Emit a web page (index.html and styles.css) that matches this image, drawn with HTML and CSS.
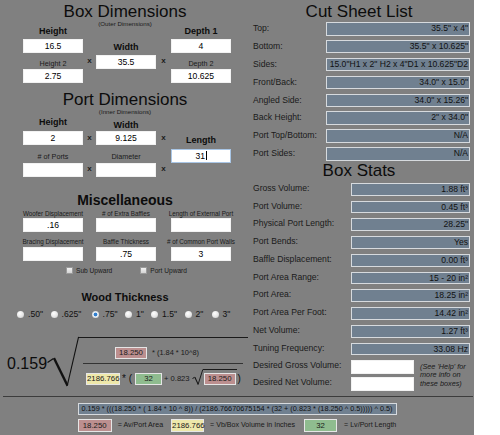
FILE: index.html
```html
<!DOCTYPE html>
<html>
<head>
<meta charset="utf-8">
<link rel="stylesheet" href="styles.css">
</head>
<body>
<div class="app">
  <div class="top">
    <div class="left">
      <div class="sec box">
        <div class="title">Box Dimensions</div>
        <div class="sub">(Outer Dimensions)</div>
        <div class="dims">
          <div class="col">
            <div class="lb mt-1">Height</div>
            <div class="field mt3">16.5</div>
            <div class="ls mt6">Height 2</div>
            <div class="field mt1">2.75</div>
          </div>
          <div class="xcol gap1"><span class="x mt29">x</span></div>
          <div class="col">
            <div class="lb mt15">Width</div>
            <div class="field mt3">35.5</div>
          </div>
          <div class="xcol gap2"><span class="x mt29">x</span></div>
          <div class="col">
            <div class="lb mt-1">Depth 1</div>
            <div class="field mt3">4</div>
            <div class="ls mt6">Depth 2</div>
            <div class="field mt1">10.625</div>
          </div>
        </div>
      </div>

      <div class="sec port">
        <div class="title">Port Dimensions</div>
        <div class="sub">(Inner Dimensions)</div>
        <div class="dims">
          <div class="col">
            <div class="lb mt2">Height</div>
            <div class="field mt4">2</div>
            <div class="ls mt7">&#35; of Ports</div>
            <div class="field mt2"></div>
          </div>
          <div class="xcol gap1"><span class="x mt18">x</span><span class="x mt21">x</span></div>
          <div class="col">
            <div class="lb mt5">Width</div>
            <div class="field mt1">9.125</div>
            <div class="ls mt7">Diameter</div>
            <div class="field mt2"></div>
          </div>
          <div class="xcol gap2"><span class="x mt18">x</span><span class="x mt21">x</span></div>
          <div class="col">
            <div class="lb mt20">Length</div>
            <div class="field focus mt4">31<span class="caret"></span></div>
          </div>
        </div>
      </div>

      <div class="sec misc">
        <div class="mtitle">Miscellaneous</div>
        <div class="dims">
          <div class="col">
            <div class="lm mt2">Woofer Displacement</div>
            <div class="field">.16</div>
            <div class="lm mt6">Bracing Displacement</div>
            <div class="field mt1"></div>
          </div>
          <div class="gap1"></div>
          <div class="col">
            <div class="lm mt2">&#35; of Extra Baffles</div>
            <div class="field"></div>
            <div class="lm mt6">Baffle Thickness</div>
            <div class="field mt1">.75</div>
          </div>
          <div class="gap2"></div>
          <div class="col">
            <div class="lm mt2">Length of External Port</div>
            <div class="field"></div>
            <div class="lm mt6">&#35; of Common Port Walls</div>
            <div class="field mt1">3</div>
          </div>
        </div>
        <div class="checks">
          <div class="chk"><span class="cbox"></span><span>Sub Upward</span></div>
          <div class="chk chk2"><span class="cbox"></span><span>Port Upward</span></div>
        </div>
      </div>

      <div class="sec wood">
        <div class="wtitle">Wood Thickness</div>
        <div class="radios">
          <div class="radio w34"><span class="rdot"></span><span>.50"</span></div>
          <div class="radio w41"><span class="rdot"></span><span>.625"</span></div>
          <div class="radio w34"><span class="rdot on"></span><span>.75"</span></div>
          <div class="radio w26"><span class="rdot"></span><span>1"</span></div>
          <div class="radio w34"><span class="rdot"></span><span>1.5"</span></div>
          <div class="radio w27"><span class="rdot"></span><span>2"</span></div>
          <div class="radio"><span class="rdot"></span><span>3"</span></div>
        </div>
      </div>

      <div class="formula">
        <div class="coef">0.159</div>
        <svg class="rad" width="33" height="52" viewBox="0 0 33 52">
          <path d="M1.5 26.5 L7.5 22.5" stroke="#111" stroke-width="1.3" fill="none"/>
          <path d="M7 22.8 L9 21.6 L22.3 48.6 L20.6 50.4 Z" fill="#111"/>
          <path d="M21.2 49.8 L32.6 0.8" stroke="#111" stroke-width="1.1" fill="none"/>
        </svg>
        <div class="frac">
          <div class="num">
            <span class="tbox pink">18.250</span>
            <span class="ntext">* (1.84 * 10^8)</span>
          </div>
          <div class="fline"></div>
          <div class="den">
            <span class="tbox yel">2186.766</span>
            <span class="op">* (</span>
            <span class="tbox grn">32</span>
            <span class="plus">+ 0.823</span>
            <span class="sqrt">
              <svg class="srad" width="11" height="16" viewBox="0 0 11 16">
                <path d="M0.5 9.5 L2.6 8.3" stroke="#111" stroke-width="1" fill="none"/>
                <path d="M2.4 8.4 L3.4 7.9 L6.6 15.2 L5.8 15.8 Z" fill="#111"/>
                <path d="M6.1 15.4 L10.8 0.5" stroke="#111" stroke-width="0.9" fill="none"/>
              </svg>
              <span class="rbody"><span class="tbox pink">18.250</span></span>
            </span>
            <span class="op cp">)</span>
          </div>
        </div>
      </div>
    </div>

    <div class="right">
      <div class="title rtitle">Cut Sheet List</div>
      <div class="cut">
        <div class="row"><span class="rl">Top:</span><span class="rf">35.5" x 4"</span></div>
        <div class="row"><span class="rl">Bottom:</span><span class="rf">35.5" x 10.625"</span></div>
        <div class="row"><span class="rl">Sides:</span><span class="rf">15.0"H1 x 2" H2 x 4"D1 x 10.625"D2</span></div>
        <div class="row"><span class="rl">Front/Back:</span><span class="rf">34.0" x 15.0"</span></div>
        <div class="row"><span class="rl">Angled Side:</span><span class="rf">34.0" x 15.26"</span></div>
        <div class="row"><span class="rl">Back Height:</span><span class="rf">2" x 34.0"</span></div>
        <div class="row"><span class="rl">Port Top/Bottom:</span><span class="rf">N/A</span></div>
        <div class="row"><span class="rl">Port Sides:</span><span class="rf">N/A</span></div>
      </div>
      <div class="title rtitle stitle">Box Stats</div>
      <div class="stats">
        <div class="row"><span class="rl">Gross Volume:</span><span class="rf">1.88 ft³</span></div>
        <div class="row"><span class="rl">Port Volume:</span><span class="rf">0.45 ft³</span></div>
        <div class="row"><span class="rl">Physical Port Length:</span><span class="rf">28.25"</span></div>
        <div class="row"><span class="rl">Port Bends:</span><span class="rf">Yes</span></div>
        <div class="row"><span class="rl">Baffle Displacement:</span><span class="rf">0.00 ft³</span></div>
        <div class="row"><span class="rl">Port Area Range:</span><span class="rf">15 - 20 in²</span></div>
        <div class="row"><span class="rl">Port Area:</span><span class="rf">18.25 in²</span></div>
        <div class="row"><span class="rl">Port Area Per Foot:</span><span class="rf">14.42 in²</span></div>
        <div class="row"><span class="rl">Net Volume:</span><span class="rf">1.27 ft³</span></div>
        <div class="row"><span class="rl">Tuning Frequency:</span><span class="rf">33.08 Hz</span></div>
      </div>
      <div class="desired">
        <span class="dl">Desired Gross Volume:</span>
        <span class="din"></span>
        <span class="note">(See 'Help' for<br>more info on<br>these boxes)</span>
        <span class="dl">Desired Net Volume:</span>
        <span class="din"></span>
      </div>
    </div>
  </div>

  <div class="divider"></div>
  <div class="fbar">0.159 * (((18.250 * ( 1.84 * 10 ^ 8)) / (2186.76670675154 * (32 + (0.823 * (18.250 ^ 0.5))))) ^ 0.5)</div>
  <div class="legend">
    <span class="lbox pink">18.250</span>
    <span class="ltext g6">= Av/Port Area</span>
    <span class="lbox yel g8">2186.766</span>
    <span class="ltext g6">= Vb/Box Volume in Inches</span>
    <span class="lbox grn g9">32</span>
    <span class="ltext g7">= Lv/Port Length</span>
  </div>
</div>
</body>
</html>
```

FILE: styles.css
```css
* { box-sizing: border-box; }
html, body { margin: 0; padding: 0; background: #ffffff; }
body { font-family: "Liberation Sans", Arial, sans-serif; color: #111; }

.app { width: 474px; height: 435px; background: #808080; overflow: hidden; }
.top { display: flex; height: 396px; }
.left { width: 250px; }
.right { width: 224px; padding: 0 4px 0 3px; }

.title { font-size: 17px; line-height: 20px; text-align: center; white-space: nowrap; color: #0c0c0c; }
.box .title { padding-top: 2px; }
.port .title { margin-top: 7px; }
.sub { font-size: 6.2px; line-height: 6px; text-align: center; margin-top: -1px; color: #1a1a1a; }

.dims { display: flex; padding-left: 23px; }
.col { width: 60px; display: flex; flex-direction: column; }
.gap1 { width: 13px; }
.gap2 { width: 15px; }
.xcol { display: flex; flex-direction: column; align-items: center; }
.x { font-size: 8px; line-height: 10px; font-weight: bold; color: #1a1a1a; }

.lb { font-size: 9px; line-height: 10px; font-weight: bold; text-align: center; white-space: nowrap; color: #0c0c0c; }
.ls { font-size: 7.2px; line-height: 9px; text-align: center; white-space: nowrap; color: #1a1a1a; }
.lm { font-size: 6.3px; line-height: 8px; text-align: center; white-space: nowrap; margin-left: -14px; margin-right: -14px; color: #1a1a1a; }

.field { height: 14px; background: #fff; border: 1px solid #f2f2f2; font-size: 8.6px; line-height: 12px; text-align: center; color: #000; white-space: nowrap; }
.field.focus { border-color: #a9c6e6; }
.caret { display: inline-block; width: 1px; height: 9px; background: #000; vertical-align: -1px; margin-left: 0.5px; }

.mt-1 { margin-top: -1px; }
.mt1 { margin-top: 1px; }
.mt2 { margin-top: 2px; }
.mt3 { margin-top: 3px; }
.mt4 { margin-top: 4px; }
.mt5 { margin-top: 5px; }
.mt6 { margin-top: 6px; }
.mt7 { margin-top: 7px; }
.mt15 { margin-top: 15px; }
.mt18 { margin-top: 18px; }
.mt20 { margin-top: 20px; }
.mt21 { margin-top: 21px; }
.mt29 { margin-top: 29px; }

.mtitle { font-size: 14px; line-height: 16px; font-weight: bold; text-align: center; margin-top: 15px; color: #0c0c0c; }

.checks { display: flex; align-items: center; padding-left: 66px; margin-top: 6px; height: 7px; }
.chk { display: flex; align-items: center; gap: 3px; font-size: 6.6px; line-height: 8px; color: #1a1a1a; white-space: nowrap; }
.chk2 { margin-left: 28px; }
.cbox { width: 7px; height: 7px; border: 1px solid #9a9a9a; background: linear-gradient(#f0f0f0, #d4d4d4); flex: none; }

.wtitle { font-size: 11px; line-height: 13px; font-weight: bold; text-align: center; margin-top: 17px; color: #0c0c0c; }
.radios { display: flex; align-items: center; padding-left: 17px; margin-top: 5px; height: 10px; font-size: 8.6px; line-height: 10px; color: #111; }
.radio { display: flex; align-items: center; gap: 4px; white-space: nowrap; flex: none; }
.w34 { width: 33.5px; }
.w41 { width: 41px; }
.w26 { width: 26px; }
.w27 { width: 27px; }
.rdot { width: 7px; height: 7px; border-radius: 50%; background: radial-gradient(circle at 40% 35%, #ffffff 0%, #e6e6e6 55%, #bdbdbd 100%); flex: none; }
.rdot.on { background: radial-gradient(circle, #2f7fd0 0%, #2f7fd0 30%, #e8eef4 45%, #c4c8cc 100%); }

.formula { display: flex; align-items: flex-start; margin-top: 17px; }
.coef { width: 46px; padding-left: 7px; margin-top: 18.5px; font-size: 16px; line-height: 18px; white-space: nowrap; color: #0c0c0c; }
.rad { display: block; flex: none; }
.frac { width: 169px; margin-top: 1px; border-top: 1px solid #1a1a1a; }
.num { display: flex; align-items: center; padding-left: 36px; margin-top: 9px; }
.ntext { margin-left: 5px; font-size: 7.4px; line-height: 12px; color: #1a1a1a; white-space: nowrap; }
.fline { margin: 4px 5px 0 4px; border-top: 1px solid #333; }
.den { display: flex; align-items: flex-start; padding-left: 7px; margin-top: 9px; }
.op { margin-left: 2px; font-size: 10px; line-height: 12px; color: #111; }
.cp { margin-left: 1px; }
.plus { margin-left: 2px; font-size: 7.6px; line-height: 12px; color: #1a1a1a; white-space: nowrap; }
.den .grn { margin-left: 3px; }
.sqrt { display: flex; align-items: flex-end; margin-top: -4px; margin-left: 2px; }
.srad { display: block; }
.rbody { display: block; border-top: 1px solid #1a1a1a; padding: 3px 1px 0 1px; }

.tbox { display: block; height: 12px; border: 1px solid #e6e6e6; font-size: 7.8px; line-height: 10px; text-align: center; color: #1a1a1a; white-space: nowrap; flex: none; }
.pink { background: #bc8f8f; width: 32px; }
.yel { background: #eee8aa; width: 34px; }
.grn { background: #8fbc8f; width: 27px; }

.rtitle { padding-top: 2px; padding-right: 5px; }
.stitle { padding-top: 0; margin-top: 0.6px; }
.cut { display: flex; flex-direction: column; gap: 4.4px; }
.cut .row { display: flex; height: 13.5px; }
.cut .rl { width: 73px; line-height: 13.5px; }
.cut .rf { width: 144px; }
.stats { display: flex; flex-direction: column; gap: 5px; margin-top: 1.6px; }
.stats .row { display: flex; height: 12.75px; }
.stats .rl { width: 98px; line-height: 11px; }
.stats .rf { width: 119px; }
.rl { font-size: 8.6px; color: #1a1a1a; white-space: nowrap; }
.rf { height: 100%; background: #708090; border: 1px solid #d6dade; font-size: 8.6px; line-height: 10.5px; text-align: right; padding-right: 1px; color: #111; white-space: nowrap; overflow: hidden; }

.desired { display: grid; grid-template-columns: 98px 63px 1fr; grid-template-rows: 14px 14px; row-gap: 3.5px; margin-top: 4.5px; }
.dl { font-size: 8.6px; line-height: 11px; color: #1a1a1a; white-space: nowrap; }
.din { background: #fff; border: 1px solid #f2f2f2; }
.note { grid-column: 3; grid-row: 1 / span 2; padding-left: 6px; margin-top: 3px; font-size: 7.3px; line-height: 8.3px; font-style: italic; color: #1a1a1a; white-space: nowrap; }

.divider { margin: 0 1px 0 3px; border-top: 1px solid #3c3c3c; }
.fbar { width: 319px; height: 12px; margin: 6px auto 0; background: #708090; border: 1px solid #d6dade; font-size: 7.3px; line-height: 10px; text-align: center; color: #111; white-space: nowrap; overflow: hidden; }
.legend { display: flex; justify-content: center; align-items: center; margin-top: 4px; height: 13px; }
.lbox { display: block; height: 13px; border: 1px solid #e6e6e6; font-size: 7.8px; line-height: 11px; text-align: center; color: #1a1a1a; white-space: nowrap; flex: none; }
.legend .pink { width: 34px; }
.legend .yel { width: 33px; }
.legend .grn { width: 33px; }
.ltext { font-size: 7.1px; line-height: 13px; color: #1a1a1a; white-space: nowrap; }
.g6 { margin-left: 6px; }
.g7 { margin-left: 7px; }
.g8 { margin-left: 8px; }
.g9 { margin-left: 9px; }
```
